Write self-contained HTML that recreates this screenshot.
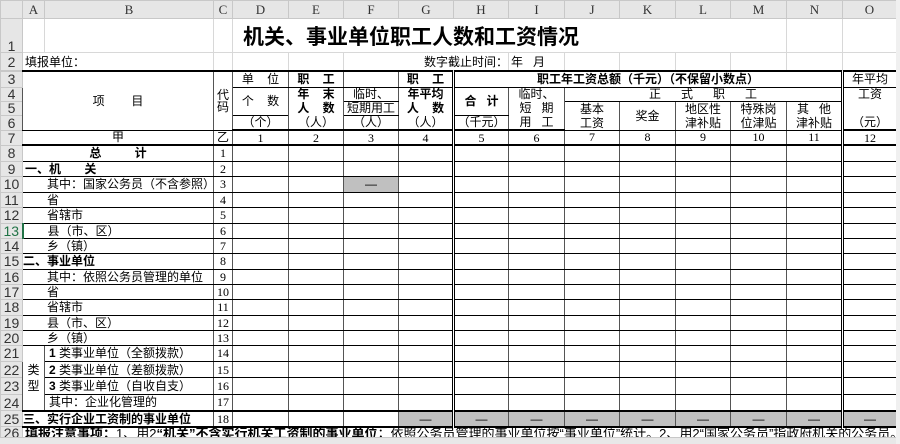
<!DOCTYPE html>
<html><head><meta charset="utf-8"><style>
*{margin:0;padding:0;box-sizing:border-box}
body{width:900px;height:444px;overflow:hidden;background:#fff;font-family:"Liberation Sans","Noto Sans CJK SC",sans-serif;font-size:12px;color:#000;position:relative}
table{border-collapse:collapse;table-layout:fixed;width:896px;position:absolute;left:0;top:0}
td{border:1px solid #d8d8d8;padding:0;white-space:nowrap;overflow:hidden;line-height:12px;vertical-align:middle}
.h{background:#e6e6e6;color:#333;text-align:center;font-family:"Liberation Serif","Noto Sans CJK SC",serif;font-size:13px;border-color:#c8c8c8}
.rn{background:#e6e6e6;color:#333;text-align:center;font-family:"Liberation Sans",sans-serif;font-size:14px;border-color:#c8c8c8}
.b td.c{border-top:1px solid #000;border-bottom:1px solid #000;border-left:1px solid #555;border-right:1px solid #555}
.c{text-align:center}
.l{text-align:left;padding-left:2px}
.bd{font-weight:bold}
.g{background:#c0c0c0}
.dr{border-right:3px double #000 !important}
.tk{border-bottom:2px solid #000 !important}
.tt{border-top:2px solid #000 !important}
.n{font-family:"Liberation Serif",serif;font-size:12px}
.gr{color:#217346}
</style></head><body>
<table>
<colgroup><col style="width:22px"><col style="width:22px"><col style="width:169px"><col style="width:19px"><col style="width:56px"><col style="width:55px"><col style="width:55px"><col style="width:55px"><col style="width:55px"><col style="width:56px"><col style="width:55px"><col style="width:56px"><col style="width:55px"><col style="width:56px"><col style="width:56px"><col style="width:54px"></colgroup>
<tr style="height:18px"><td class="h"></td><td class="h">A</td><td class="h">B</td><td class="h">C</td><td class="h">D</td><td class="h">E</td><td class="h">F</td><td class="h">G</td><td class="h">H</td><td class="h">I</td><td class="h">J</td><td class="h">K</td><td class="h">L</td><td class="h">M</td><td class="h">N</td><td class="h">O</td></tr>
<tr style="height:34px"><td class="rn" style="vertical-align:bottom">1</td><td></td><td></td><td></td><td colspan="10" style="font-size:21px;font-weight:bold;text-align:left;padding-left:10px;line-height:24px;vertical-align:bottom;padding-bottom:2px">机关、事业单位职工人数和工资情况</td><td></td><td></td></tr>
<tr style="height:18px"><td class="rn">2</td><td colspan="2" class="l">填报单位：</td><td></td><td></td><td></td><td colspan="3" style="text-align:right">数字截止时间：</td><td class="l">年&nbsp;&nbsp;&nbsp;月</td><td></td><td></td><td></td><td></td><td></td><td></td></tr>
</table>
<table style="top:70px" class="b">
<colgroup><col style="width:22px"><col style="width:22px"><col style="width:169px"><col style="width:19px"><col style="width:56px"><col style="width:55px"><col style="width:55px"><col style="width:55px"><col style="width:55px"><col style="width:56px"><col style="width:55px"><col style="width:56px"><col style="width:55px"><col style="width:56px"><col style="width:56px"><col style="width:54px"></colgroup>
<tr style="height:16px"><td class="rn">3</td><td class="c tt" colspan="2" rowspan="4">项&nbsp;&nbsp;&nbsp;&nbsp;&nbsp;&nbsp;&nbsp;&nbsp;目</td><td class="c tt" rowspan="4">代<br>码</td><td class="c tt">单&nbsp;&nbsp;&nbsp;&nbsp;位</td><td class="c tt bd">职&nbsp;&nbsp;&nbsp;&nbsp;工</td><td class="c tt"></td><td class="c tt bd dr">职&nbsp;&nbsp;&nbsp;&nbsp;工</td><td class="c tt bd" colspan="7" style="border-right:3px double #000">职工年工资总额（千元）（不保留小数点）</td><td class="c tt">年平均</td></tr>
<tr style="height:14px"><td class="rn">4</td><td class="c" rowspan="2" style="border-bottom:none">个&nbsp;&nbsp;&nbsp;&nbsp;数</td><td class="c bd" style="border-bottom:none">年&nbsp;&nbsp;&nbsp;&nbsp;末</td><td class="c">临时、</td><td class="c bd dr" style="border-bottom:none">年平均</td><td class="c bd" rowspan="2">合&nbsp;&nbsp;&nbsp;计</td><td class="c" style="border-bottom:none">临时、</td><td class="c" colspan="5" style="border-right:3px double #000">正&nbsp;&nbsp;&nbsp;&nbsp;&nbsp;&nbsp;式&nbsp;&nbsp;&nbsp;&nbsp;&nbsp;&nbsp;职&nbsp;&nbsp;&nbsp;&nbsp;&nbsp;&nbsp;工</td><td class="c" style="border-bottom:none">工资</td></tr>
<tr style="height:14px"><td class="rn">5</td><td class="c bd" style="border-top:none;border-bottom:none">人&nbsp;&nbsp;&nbsp;&nbsp;数</td><td class="c">短期用工</td><td class="c bd dr" style="border-top:none;border-bottom:none">人&nbsp;&nbsp;&nbsp;&nbsp;数</td><td class="c" style="border-top:none;border-bottom:none">短&nbsp;&nbsp;&nbsp;期</td><td class="c" rowspan="2" style="line-height:14px">基本<br>工资</td><td class="c" rowspan="2">奖金</td><td class="c" rowspan="2" style="line-height:14px">地区性<br>津补贴</td><td class="c" rowspan="2" style="line-height:14px">特殊岗<br>位津贴</td><td class="c dr" rowspan="2" style="line-height:14px">其&nbsp;&nbsp;&nbsp;他<br>津补贴</td><td class="c" style="border-top:none;border-bottom:none"></td></tr>
<tr style="height:15px"><td class="rn">6</td><td class="c tk">（个）</td><td class="c tk" style="border-top:none">（人）</td><td class="c tk">（人）</td><td class="c tk dr" style="border-top:none">（人）</td><td class="c tk">（千元）</td><td class="c tk" style="border-top:none">用&nbsp;&nbsp;&nbsp;工</td><td class="c tk" style="border-top:none">（元）</td></tr>
<tr style="height:15px"><td class="rn">7</td><td class="c tk" colspan="2">甲</td><td class="c tk">乙</td><td class="c tk n">1</td><td class="c tk n">2</td><td class="c tk n">3</td><td class="c tk n dr">4</td><td class="c tk n">5</td><td class="c tk n">6</td><td class="c tk n">7</td><td class="c tk n">8</td><td class="c tk n">9</td><td class="c tk n">10</td><td class="c tk n dr">11</td><td class="c tk n">12</td></tr>
<tr style="height:16px"><td class="rn">8</td><td class="c bd" colspan="2">总&nbsp;&nbsp;&nbsp;&nbsp;&nbsp;&nbsp;&nbsp;&nbsp;&nbsp;&nbsp;计</td><td class="c n">1</td><td class="c"></td><td class="c"></td><td class="c"></td><td class="c dr"></td><td class="c"></td><td class="c"></td><td class="c"></td><td class="c"></td><td class="c"></td><td class="c"></td><td class="c dr"></td><td class="c"></td></tr>
<tr style="height:15px"><td class="rn">9</td><td class="c l bd" colspan="2" style="text-align:left">一、机&nbsp;&nbsp;&nbsp;&nbsp;&nbsp;&nbsp;&nbsp;关</td><td class="c n">2</td><td class="c"></td><td class="c"></td><td class="c"></td><td class="c dr"></td><td class="c"></td><td class="c"></td><td class="c"></td><td class="c"></td><td class="c"></td><td class="c"></td><td class="c dr"></td><td class="c"></td></tr>
<tr style="height:16px"><td class="rn">10</td><td class="c" colspan="2" style="text-align:left;padding-left:24px">其中：国家公务员（不含参照）</td><td class="c n">3</td><td class="c"></td><td class="c"></td><td class="c g">—</td><td class="c dr"></td><td class="c"></td><td class="c"></td><td class="c"></td><td class="c"></td><td class="c"></td><td class="c"></td><td class="c dr"></td><td class="c"></td></tr>
<tr style="height:15px"><td class="rn">11</td><td class="c" colspan="2" style="text-align:left;padding-left:24px">省</td><td class="c n">4</td><td class="c"></td><td class="c"></td><td class="c"></td><td class="c dr"></td><td class="c"></td><td class="c"></td><td class="c"></td><td class="c"></td><td class="c"></td><td class="c"></td><td class="c dr"></td><td class="c"></td></tr>
<tr style="height:16px"><td class="rn">12</td><td class="c" colspan="2" style="text-align:left;padding-left:24px">省辖市</td><td class="c n">5</td><td class="c"></td><td class="c"></td><td class="c"></td><td class="c dr"></td><td class="c"></td><td class="c"></td><td class="c"></td><td class="c"></td><td class="c"></td><td class="c"></td><td class="c dr"></td><td class="c"></td></tr>
<tr style="height:15px"><td class="rn gr" style="border-right:2px solid #217346">13</td><td class="c" colspan="2" style="text-align:left;padding-left:24px">县（市、区）</td><td class="c n">6</td><td class="c"></td><td class="c"></td><td class="c"></td><td class="c dr"></td><td class="c"></td><td class="c"></td><td class="c"></td><td class="c"></td><td class="c"></td><td class="c"></td><td class="c dr"></td><td class="c"></td></tr>
<tr style="height:15px"><td class="rn">14</td><td class="c" colspan="2" style="text-align:left;padding-left:24px">乡（镇）</td><td class="c n">7</td><td class="c"></td><td class="c"></td><td class="c"></td><td class="c dr"></td><td class="c"></td><td class="c"></td><td class="c"></td><td class="c"></td><td class="c"></td><td class="c"></td><td class="c dr"></td><td class="c"></td></tr>
<tr style="height:16px"><td class="rn">15</td><td class="c bd" colspan="2" style="text-align:left">二、事业单位</td><td class="c n">8</td><td class="c"></td><td class="c"></td><td class="c"></td><td class="c dr"></td><td class="c"></td><td class="c"></td><td class="c"></td><td class="c"></td><td class="c"></td><td class="c"></td><td class="c dr"></td><td class="c"></td></tr>
<tr style="height:15px"><td class="rn">16</td><td class="c" colspan="2" style="text-align:left;padding-left:24px">其中：依照公务员管理的单位</td><td class="c n">9</td><td class="c"></td><td class="c"></td><td class="c"></td><td class="c dr"></td><td class="c"></td><td class="c"></td><td class="c"></td><td class="c"></td><td class="c"></td><td class="c"></td><td class="c dr"></td><td class="c"></td></tr>
<tr style="height:15px"><td class="rn">17</td><td class="c" colspan="2" style="text-align:left;padding-left:24px">省</td><td class="c n">10</td><td class="c"></td><td class="c"></td><td class="c"></td><td class="c dr"></td><td class="c"></td><td class="c"></td><td class="c"></td><td class="c"></td><td class="c"></td><td class="c"></td><td class="c dr"></td><td class="c"></td></tr>
<tr style="height:16px"><td class="rn">18</td><td class="c" colspan="2" style="text-align:left;padding-left:24px">省辖市</td><td class="c n">11</td><td class="c"></td><td class="c"></td><td class="c"></td><td class="c dr"></td><td class="c"></td><td class="c"></td><td class="c"></td><td class="c"></td><td class="c"></td><td class="c"></td><td class="c dr"></td><td class="c"></td></tr>
<tr style="height:15px"><td class="rn">19</td><td class="c" colspan="2" style="text-align:left;padding-left:24px">县（市、区）</td><td class="c n">12</td><td class="c"></td><td class="c"></td><td class="c"></td><td class="c dr"></td><td class="c"></td><td class="c"></td><td class="c"></td><td class="c"></td><td class="c"></td><td class="c"></td><td class="c dr"></td><td class="c"></td></tr>
<tr style="height:15px"><td class="rn">20</td><td class="c" colspan="2" style="text-align:left;padding-left:24px">乡（镇）</td><td class="c n">13</td><td class="c"></td><td class="c"></td><td class="c"></td><td class="c dr"></td><td class="c"></td><td class="c"></td><td class="c"></td><td class="c"></td><td class="c"></td><td class="c"></td><td class="c dr"></td><td class="c"></td></tr>
<tr style="height:16px"><td class="rn">21</td><td class="c" rowspan="4" style="line-height:16px">&nbsp;<br>类<br>型<br>&nbsp;</td><td class="c" style="text-align:left;padding-left:4px"><b>1</b> 类事业单位（全额拨款）</td><td class="c n">14</td><td class="c"></td><td class="c"></td><td class="c"></td><td class="c dr"></td><td class="c"></td><td class="c"></td><td class="c"></td><td class="c"></td><td class="c"></td><td class="c"></td><td class="c dr"></td><td class="c"></td></tr>
<tr style="height:15px"><td class="rn">22</td><td class="c" style="text-align:left;padding-left:4px"><b>2</b> 类事业单位（差额拨款）</td><td class="c n">15</td><td class="c"></td><td class="c"></td><td class="c"></td><td class="c dr"></td><td class="c"></td><td class="c"></td><td class="c"></td><td class="c"></td><td class="c"></td><td class="c"></td><td class="c dr"></td><td class="c"></td></tr>
<tr style="height:16px"><td class="rn">23</td><td class="c" style="text-align:left;padding-left:4px"><b>3</b> 类事业单位（自收自支）</td><td class="c n">16</td><td class="c"></td><td class="c"></td><td class="c"></td><td class="c dr"></td><td class="c"></td><td class="c"></td><td class="c"></td><td class="c"></td><td class="c"></td><td class="c"></td><td class="c dr"></td><td class="c"></td></tr>
<tr style="height:15px"><td class="rn">24</td><td class="c" style="text-align:left;padding-left:4px">其中：企业化管理的</td><td class="c n">17</td><td class="c"></td><td class="c"></td><td class="c"></td><td class="c dr"></td><td class="c"></td><td class="c"></td><td class="c"></td><td class="c"></td><td class="c"></td><td class="c"></td><td class="c dr"></td><td class="c"></td></tr>
<tr style="height:16px"><td class="rn">25</td><td class="c bd tt" colspan="2" style="text-align:left">三、实行企业工资制的事业单位</td><td class="c n tt">18</td><td class="c tt"></td><td class="c tt"></td><td class="c tt"></td><td class="c g dr tt">—</td><td class="c g tt">—</td><td class="c g tt">—</td><td class="c g tt">—</td><td class="c g tt">—</td><td class="c g tt">—</td><td class="c g tt">—</td><td class="c g dr tt">—</td><td class="c g tt">—</td></tr>
<tr style="height:17px"><td class="rn" style="vertical-align:top">26</td><td colspan="15" style="text-align:left;vertical-align:top;padding-left:2px;border-top:2px solid #000;font-size:13px"><b>填报注意事项：</b>1、用2<b>“机关”不含实行机关工资制的事业单位</b>；依照公务员管理的事业单位按“事业单位”统计。2、用2“国家公务员”指政府机关的公务员。</td></tr>
</table>
<div style="position:absolute;left:0;top:437px;width:900px;height:7px;background:#e8e8e8;border-top:1px solid #c8c8c8"></div>
<div style="position:absolute;left:896px;top:0;width:4px;height:444px;background:#f0f0f0"></div>
</body></html>
